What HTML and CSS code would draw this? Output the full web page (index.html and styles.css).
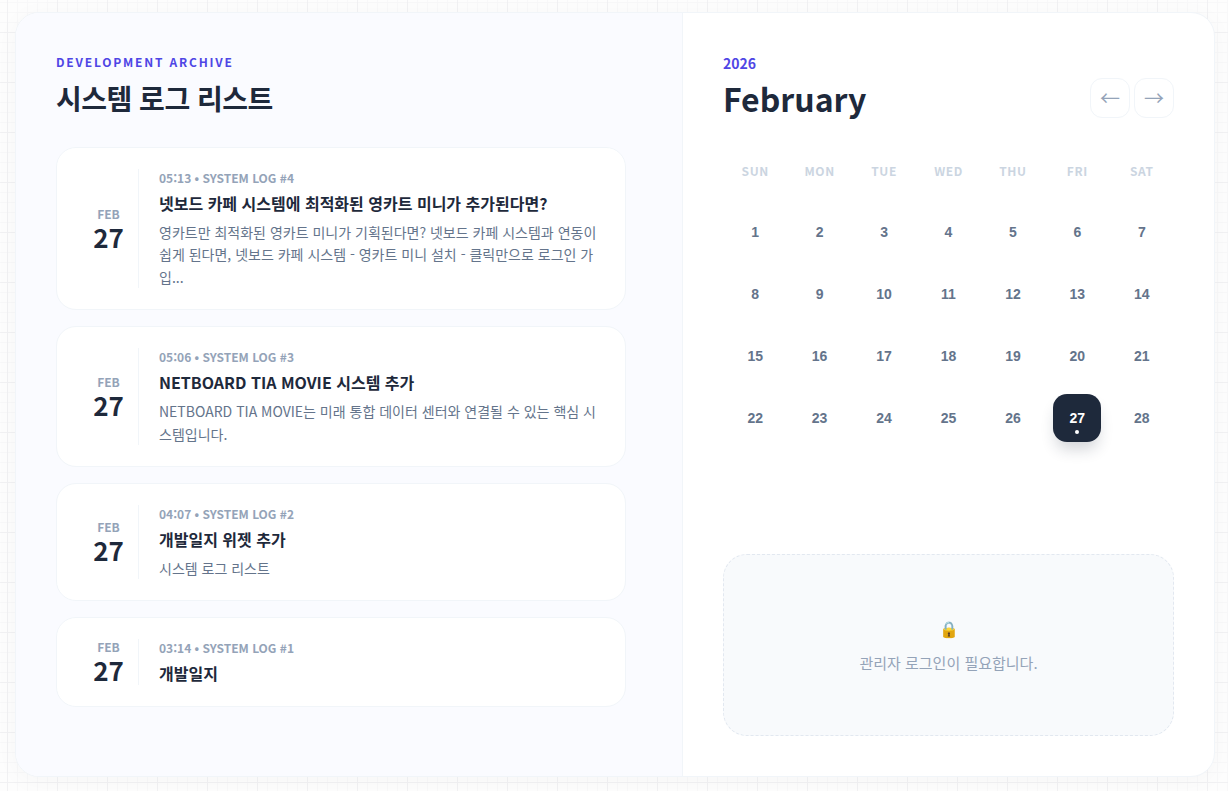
FILE: index.html
```html
<!DOCTYPE html>
<html lang="ko">
<head>
<meta charset="utf-8">
<title>Development Archive</title>
<link rel="stylesheet" href="styles.css">
</head>
<body>
<main class="shell">
  <section class="archive">
    <header class="archive-head">
      <p class="eyebrow">DEVELOPMENT ARCHIVE</p>
      <h1 class="archive-title">시스템 로그 리스트</h1>
    </header>
    <div class="log-list">
      <article class="log-card">
        <div class="log-date"><span class="log-month">FEB</span><span class="log-day">27</span></div>
        <div class="log-body">
          <p class="log-meta">05:13 • SYSTEM LOG #4</p>
          <h2 class="log-title">넷보드 카페 시스템에 최적화된 영카트 미니가 추가된다면?</h2>
          <p class="log-text">영카트만 최적화된 영카트 미니가 기획된다면? 넷보드 카페 시스템과 연동이 쉽게 된다면, 넷보드 카페 시스템 - 영카트 미니 설치 - 클릭만으로 로그인 가입...</p>
        </div>
      </article>
      <article class="log-card">
        <div class="log-date"><span class="log-month">FEB</span><span class="log-day">27</span></div>
        <div class="log-body">
          <p class="log-meta">05:06 • SYSTEM LOG #3</p>
          <h2 class="log-title">NETBOARD TIA MOVIE 시스템 추가</h2>
          <p class="log-text">NETBOARD TIA MOVIE는 미래 통합 데이터 센터와 연결될 수 있는 핵심 시스템입니다.</p>
        </div>
      </article>
      <article class="log-card">
        <div class="log-date"><span class="log-month">FEB</span><span class="log-day">27</span></div>
        <div class="log-body">
          <p class="log-meta">04:07 • SYSTEM LOG #2</p>
          <h2 class="log-title">개발일지 위젯 추가</h2>
          <p class="log-text">시스템 로그 리스트</p>
        </div>
      </article>
      <article class="log-card">
        <div class="log-date"><span class="log-month">FEB</span><span class="log-day">27</span></div>
        <div class="log-body">
          <p class="log-meta">03:14 • SYSTEM LOG #1</p>
          <h2 class="log-title">개발일지</h2>
        </div>
      </article>
    </div>
  </section>
  <aside class="side">
    <header class="cal-head">
      <div>
        <p class="cal-year">2026</p>
        <h2 class="cal-month">February</h2>
      </div>
      <div class="cal-nav">
        <button class="cal-btn" type="button">←</button>
        <button class="cal-btn" type="button">→</button>
      </div>
    </header>
    <div class="cal-grid">
      <span class="cal-dow">SUN</span><span class="cal-dow">MON</span><span class="cal-dow">TUE</span><span class="cal-dow">WED</span><span class="cal-dow">THU</span><span class="cal-dow">FRI</span><span class="cal-dow">SAT</span>
      <span class="cal-day">1</span><span class="cal-day">2</span><span class="cal-day">3</span><span class="cal-day">4</span><span class="cal-day">5</span><span class="cal-day">6</span><span class="cal-day">7</span>
      <span class="cal-day">8</span><span class="cal-day">9</span><span class="cal-day">10</span><span class="cal-day">11</span><span class="cal-day">12</span><span class="cal-day">13</span><span class="cal-day">14</span>
      <span class="cal-day">15</span><span class="cal-day">16</span><span class="cal-day">17</span><span class="cal-day">18</span><span class="cal-day">19</span><span class="cal-day">20</span><span class="cal-day">21</span>
      <span class="cal-day">22</span><span class="cal-day">23</span><span class="cal-day">24</span><span class="cal-day">25</span><span class="cal-day">26</span><span class="cal-day cal-today">27</span><span class="cal-day">28</span>
    </div>
    <div class="login-box">
      <span class="login-icon">🔒</span>
      <p class="login-text">관리자 로그인이 필요합니다.</p>
    </div>
  </aside>
</main>
</body>
</html>
```
FILE: styles.css
```css
* { box-sizing: border-box; }
html, body { height: 100%; }
body {
  margin: 0;
  padding: 12px 13px 14px 15px;
  font-family: "Noto Sans CJK KR", "Noto Sans", sans-serif;
  background-color: #fdfdfd;
  background-image:
    linear-gradient(#f1f1f3 1px, transparent 1px),
    linear-gradient(90deg, #f1f1f3 1px, transparent 1px),
    linear-gradient(#f8f8f9 1px, transparent 1px),
    linear-gradient(90deg, #f8f8f9 1px, transparent 1px);
  background-size: 50px 50px, 50px 50px, 10px 10px, 10px 10px;
  background-position: 7px 32px, 7px 32px, 7px 32px, 7px 32px;
}
p, h1, h2 { margin: 0; }

.shell {
  display: flex;
  width: 1200px;
  height: 765px;
  background: #fff;
  border: 1px solid #f1f5f9;
  border-radius: 24px;
  overflow: hidden;
  box-shadow: 0 4px 24px rgba(15, 23, 42, 0.03);
}

.archive {
  width: 667px;
  flex: none;
  padding: 40px 56px 0 40px;
  background: #fafbff;
  border-right: 1px solid #f1f5f9;
}
.eyebrow {
  font-size: 12px;
  line-height: 18px;
  font-weight: 700;
  letter-spacing: 1.8px;
  color: #4f46e5;
}
.archive-title {
  margin-top: 6px;
  font-size: 28px;
  line-height: 42px;
  font-weight: 700;
  color: #1e293b;
  letter-spacing: -0.5px;
}
.log-list {
  display: flex;
  flex-direction: column;
  gap: 16px;
  margin-top: 28px;
}
.log-card {
  display: flex;
  align-items: stretch;
  gap: 20px;
  padding: 21px 24px;
  background: #fff;
  border: 1px solid #f1f5f9;
  border-radius: 20px;
}
.log-date {
  flex: none;
  width: 58px;
  padding-right: 2px;
  border-right: 1px solid #f1f5f9;
  display: flex;
  flex-direction: column;
  align-items: center;
  justify-content: center;
}
.log-month {
  font-size: 12px;
  line-height: 16px;
  font-weight: 700;
  color: #94a3b8;
}
.log-day {
  font-size: 26px;
  line-height: 30px;
  font-weight: 700;
  color: #1e293b;
}
.log-body { flex: 1; min-width: 0; }
.log-meta {
  font-size: 12px;
  line-height: 18px;
  font-weight: 700;
  color: #94a3b8;
}
.log-title {
  margin-top: 4px;
  font-size: 16px;
  line-height: 24px;
  font-weight: 700;
  color: #1e293b;
}
.log-text {
  margin-top: 6px;
  font-size: 14px;
  line-height: 22.4px;
  color: #64748b;
}

.side {
  flex: 1;
  min-width: 0;
  padding: 40px 40px 40px 40px;
  display: flex;
  flex-direction: column;
}
.cal-head {
  display: flex;
  justify-content: space-between;
  align-items: flex-end;
}
.cal-year {
  font-size: 14px;
  line-height: 21px;
  font-weight: 700;
  color: #4f46e5;
}
.cal-month {
  font-size: 32px;
  line-height: 48px;
  font-weight: 700;
  color: #1e293b;
}
.cal-nav { display: flex; gap: 4px; margin-bottom: 4px; }
.cal-btn {
  width: 40px;
  height: 40px;
  padding: 0;
  background: #fff;
  border: 1px solid #f1f5f9;
  border-radius: 12px;
  font-family: inherit;
  font-size: 20px;
  line-height: 1;
  color: #94a3b8;
}
.cal-grid {
  display: grid;
  grid-template-columns: repeat(7, 1fr);
  grid-auto-rows: 48px;
  row-gap: 14px;
  margin-top: 24px;
  justify-items: center;
  align-items: center;
}
.cal-dow {
  font-size: 12px;
  font-weight: 700;
  letter-spacing: 0.6px;
  color: #cbd5e1;
}
.cal-day {
  position: relative;
  width: 48px;
  height: 48px;
  display: flex;
  align-items: center;
  justify-content: center;
  font-family: "Liberation Sans", Arial, sans-serif;
  font-size: 14px;
  font-weight: 700;
  color: #64748b;
}
.cal-today {
  background: #1e293b;
  color: #fff;
  border-radius: 14px;
  box-shadow: 0 10px 15px -3px rgba(30, 41, 59, 0.2);
}
.cal-today::after {
  content: "";
  position: absolute;
  left: 22px;
  bottom: 8px;
  width: 4px;
  height: 4px;
  border-radius: 50%;
  background: #fff;
}
.login-box {
  margin-top: auto;
  height: 182px;
  display: flex;
  flex-direction: column;
  align-items: center;
  justify-content: center;
  gap: 12px;
  background: #f8fafc;
  border: 1px dashed #e2e8f0;
  border-radius: 24px;
}
.login-icon {
  font-size: 16px;
  line-height: 24px;
}
.login-text {
  font-size: 15px;
  line-height: 22px;
  color: #94a3b8;
}
```
